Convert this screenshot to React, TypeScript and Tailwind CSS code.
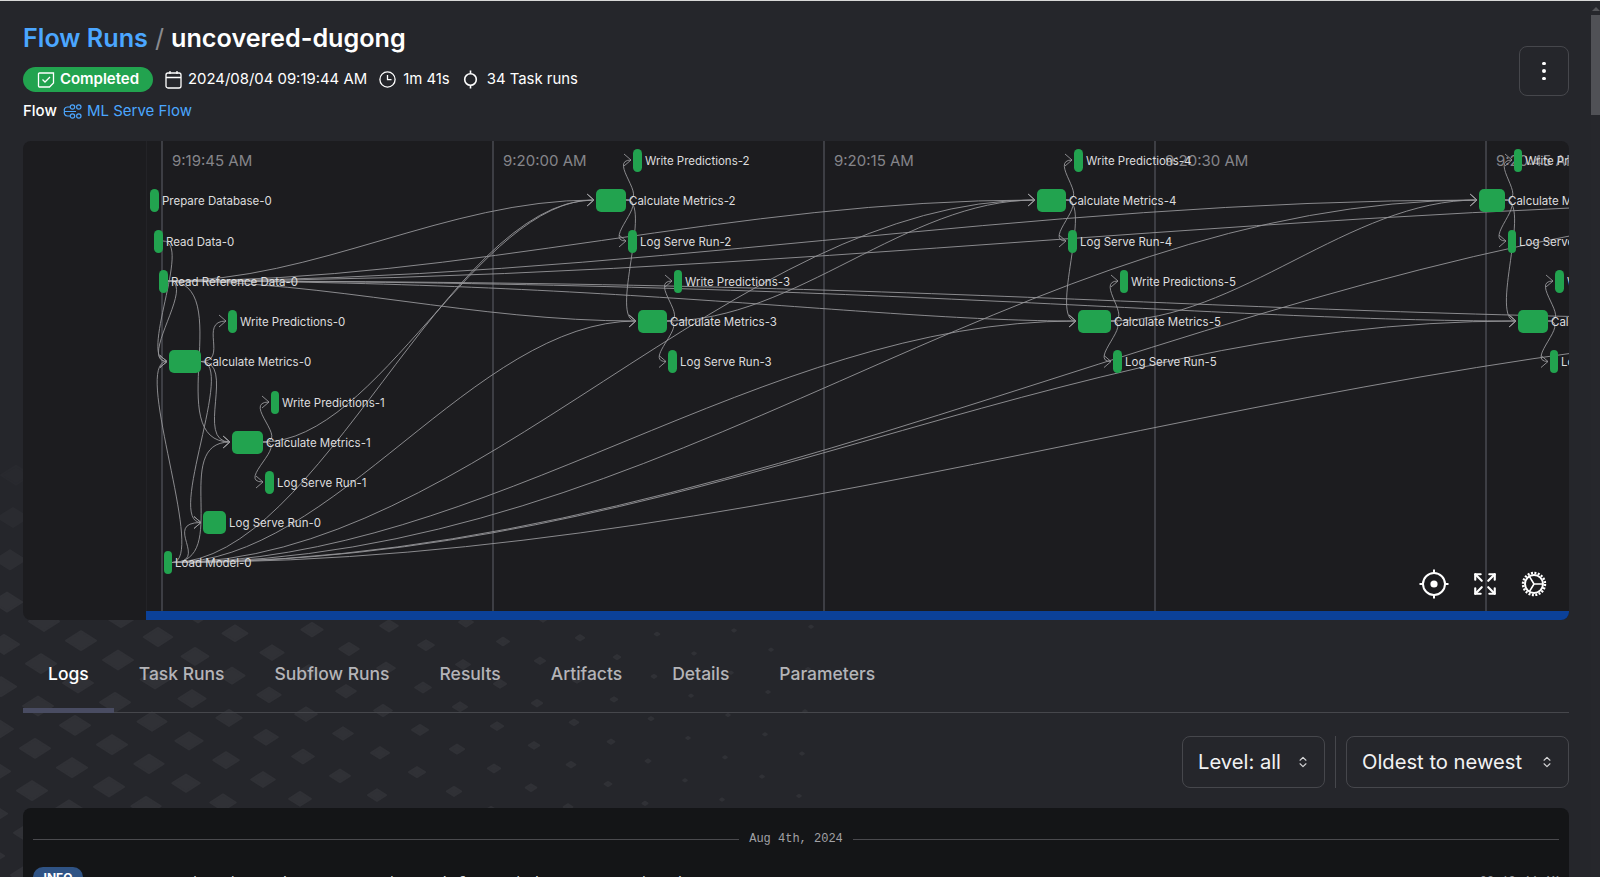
import { ChevronsUpDown, Expand } from 'lucide-react'

const rowY = [160, 200, 241, 281, 321, 361.5, 402, 442, 482, 522.5, 562.5]
const panelX = 23
const panelY = 141

type GraphNode = { id: string; label: string; x: number; w: number; row: number }

const nodes: GraphNode[] = [
  { id: 'prep', label: 'Prepare Database-0', x: 150, w: 9, row: 1 },
  { id: 'read', label: 'Read Data-0', x: 154, w: 9, row: 2 },
  { id: 'ref', label: 'Read Reference Data-0', x: 159, w: 9, row: 3 },
  { id: 'w0', label: 'Write Predictions-0', x: 228, w: 9, row: 4 },
  { id: 'c0', label: 'Calculate Metrics-0', x: 169, w: 32, row: 5 },
  { id: 'w1', label: 'Write Predictions-1', x: 271, w: 8, row: 6 },
  { id: 'c1', label: 'Calculate Metrics-1', x: 232, w: 31, row: 7 },
  { id: 'l1', label: 'Log Serve Run-1', x: 265, w: 9, row: 8 },
  { id: 'l0', label: 'Log Serve Run-0', x: 203, w: 23, row: 9 },
  { id: 'load', label: 'Load Model-0', x: 164, w: 8, row: 10 },
  { id: 'w2', label: 'Write Predictions-2', x: 633, w: 9, row: 0 },
  { id: 'c2', label: 'Calculate Metrics-2', x: 596, w: 30, row: 1 },
  { id: 'l2', label: 'Log Serve Run-2', x: 628, w: 9, row: 2 },
  { id: 'w3', label: 'Write Predictions-3', x: 674, w: 8, row: 3 },
  { id: 'c3', label: 'Calculate Metrics-3', x: 638, w: 29, row: 4 },
  { id: 'l3', label: 'Log Serve Run-3', x: 668, w: 9, row: 5 },
  { id: 'w4', label: 'Write Predictions-4', x: 1074, w: 9, row: 0 },
  { id: 'c4', label: 'Calculate Metrics-4', x: 1037, w: 29, row: 1 },
  { id: 'l4', label: 'Log Serve Run-4', x: 1068, w: 9, row: 2 },
  { id: 'w5', label: 'Write Predictions-5', x: 1120, w: 8, row: 3 },
  { id: 'c5', label: 'Calculate Metrics-5', x: 1078, w: 33, row: 4 },
  { id: 'l5', label: 'Log Serve Run-5', x: 1113, w: 9, row: 5 },
  { id: 'w6', label: 'Write Predictions-6', x: 1514, w: 8, row: 0 },
  { id: 'c6', label: 'Calculate Metrics-6', x: 1479, w: 26, row: 1 },
  { id: 'l6', label: 'Log Serve Run-6', x: 1508, w: 8, row: 2 },
  { id: 'w7', label: 'Write Predictions-7', x: 1555, w: 9, row: 3 },
  { id: 'c7', label: 'Calculate Metrics-7', x: 1518, w: 30, row: 4 },
  { id: 'l7', label: 'Log Serve Run-7', x: 1550, w: 8, row: 5 },
  // past the right edge of the panel, only their edges show
  { id: 'c8', label: '', x: 1920, w: 30, row: 1 },
  { id: 'c9', label: '', x: 2000, w: 30, row: 4 },
]

// from, to, control offset at the start, control offset at the end (default: 35% of the distance)
const edges: [string, string, number?, number?][] = [
  ['read', 'c0', 30],
  ['ref', 'c0', 30],
  ['load', 'c0', 36],
  ['ref', 'c1', 70],
  ['load', 'c1', 60],
  ['c0', 'c1', 36],
  ['c0', 'w0', 28],
  ['c0', 'l0', 36],
  ['load', 'l0', 40],
  ['c1', 'w1', 28],
  ['c1', 'l1', 28],
  ['c1', 'c2'],
  ['load', 'c2'],
  ['ref', 'c2'],
  ['c2', 'w2', 24],
  ['c2', 'l2', 24],
  ['c2', 'c3', 28],
  ['ref', 'c3'],
  ['load', 'c3'],
  ['c3', 'w3', 24],
  ['c3', 'l3', 24],
  ['c3', 'c4'],
  ['ref', 'c4'],
  ['load', 'c4'],
  ['c4', 'w4', 24],
  ['c4', 'l4', 24],
  ['c4', 'c5', 28],
  ['ref', 'c5', 450, 200],
  ['load', 'c5'],
  ['c5', 'w5', 24],
  ['c5', 'l5', 24],
  ['c5', 'c6'],
  ['ref', 'c6'],
  ['load', 'c6', 500, 460],
  ['c6', 'w6', 24],
  ['c6', 'l6', 24],
  ['c6', 'c7', 28],
  ['ref', 'c7', 700, 300],
  ['load', 'c7', 520, 470],
  ['c7', 'w7', 24],
  ['c7', 'l7', 24],
  ['ref', 'c8'],
  ['ref', 'c9', 900, 800],
  ['load', 'c8'],
  ['load', 'c9'],
]

const gridLines = [
  { x: 162, label: '9:19:45 AM' },
  { x: 493, label: '9:20:00 AM' },
  { x: 824, label: '9:20:15 AM' },
  { x: 1155, label: '9:20:30 AM' },
  { x: 1486, label: '9:20:45 AM' },
]

const tabs = ['Logs', 'Task Runs', 'Subflow Runs', 'Results', 'Artifacts', 'Details', 'Parameters']

function edgePath(fromId: string, toId: string, d1?: number, d2?: number) {
  const a = nodes.find((n) => n.id === fromId)!
  const b = nodes.find((n) => n.id === toId)!
  const x1 = a.x + a.w - panelX
  const y1 = rowY[a.row] - panelY
  const x2 = b.x - 2 - panelX
  const y2 = rowY[b.row] - panelY
  const start = d1 ?? Math.abs(x2 - x1) * 0.35
  const end = d2 ?? start
  return { d: `M${x1} ${y1} C${x1 + start} ${y1} ${x2 - end} ${y2} ${x2} ${y2}`, x2, y2 }
}

function PageBackdrop() {
  const shapes: { x: number; y: number; w: number; h: number; o: number }[] = []
  for (let i = -6; i < 16; i++) {
    for (let j = -12; j < 16; j++) {
      const x = 118 + i * 77 - j * 40
      const y = 659 - i * 3.7 + j * 23
      if (x < -20 || x > 830 || y < 430 || y > 890) continue
      const scale = Math.max(0.12, 1 - Math.max(0, x - 130) / 620)
      const o = Math.min(1, (y - 430) / 160)
      shapes.push({ x, y, w: 15 * scale, h: 9.5 * scale, o })
    }
  }
  return (
    <svg className="absolute left-0 top-0 h-[877px] w-[1591px]" viewBox="0 0 1591 877">
      {shapes.map((s) => (
        <polygon
          key={`${s.x}-${s.y}`}
          points={`${s.x - s.w},${s.y} ${s.x},${s.y - s.h} ${s.x + s.w},${s.y} ${s.x},${s.y + s.h}`}
          fill="#303136"
          stroke="#303136"
          strokeLinejoin="round"
          strokeWidth="2"
          opacity={s.o}
        />
      ))}
    </svg>
  )
}

function CheckBadgeIcon() {
  return (
    <svg width="18" height="16" viewBox="0 0 18 16" fill="none" stroke="currentColor" strokeWidth="1.3">
      <path d="M2.5 1h14v10l-4 4h-10a1 1 0 0 1-1-1V2a1 1 0 0 1 1-1z" />
      <path d="m5.5 7.5 2.5 2.5 5-5" />
    </svg>
  )
}

function CalendarIcon() {
  return (
    <svg width="17" height="19" viewBox="0 0 17 19" fill="none" stroke="currentColor" strokeWidth="1.3">
      <rect x="1" y="3" width="15" height="15" rx="2" />
      <path d="M1 7.5h15M5 1v3M12 1v3" />
    </svg>
  )
}

function ClockIcon() {
  return (
    <svg width="17" height="17" viewBox="0 0 17 17" fill="none" stroke="currentColor" strokeWidth="1.3">
      <circle cx="8.5" cy="8.5" r="7.6" />
      <path d="M8.5 4v4.7h4" />
    </svg>
  )
}

function TaskRunIcon() {
  return (
    <svg width="15" height="19" viewBox="0 0 15 19" fill="none" stroke="currentColor" strokeWidth="1.6">
      <circle cx="7.5" cy="9.5" r="5.8" />
      <path d="M7.5 0.5v3M7.5 15.5v3" />
    </svg>
  )
}

function FlowIcon() {
  return (
    <svg width="19" height="15" viewBox="0 0 19 15" fill="none" stroke="currentColor" strokeWidth="1.2">
      <circle cx="9.5" cy="3" r="2.2" />
      <circle cx="15.8" cy="3" r="2.2" />
      <circle cx="9.5" cy="12" r="2.2" />
      <circle cx="15.8" cy="12" r="2.2" />
      <path d="M7.3 3H4.5a3.2 3.2 0 0 0-3 4.5 3.2 3.2 0 0 0 3 4.5h2.8M2 7.5h11" />
    </svg>
  )
}

function TargetIcon() {
  return (
    <svg width="30" height="30" viewBox="0 0 30 30" fill="none" stroke="white" strokeWidth="2">
      <circle cx="15" cy="15" r="11" />
      <circle cx="15" cy="15" r="3.6" fill="white" stroke="none" />
      <path d="M15 0.5v4M15 25.5v4M0.5 15h4M25.5 15h4" />
    </svg>
  )
}

function GearIcon() {
  return (
    <svg width="26" height="26" viewBox="0 0 26 26" fill="none" stroke="white">
      <circle cx="13" cy="13" r="9" strokeWidth="2" />
      <circle cx="13" cy="13" r="11" strokeWidth="2.4" strokeDasharray="2 1.46" />
      <path d="M13 13h8.5M13 13 8.5 5.6M13 13 8.5 20.4" strokeWidth="1.6" />
    </svg>
  )
}

function FlowGraph() {
  return (
    <div className="relative mt-[20px] h-[479px] overflow-hidden rounded-lg bg-[#1c1c1f]">
      <div className="absolute bottom-0 left-[123px] top-0 w-px bg-[#232327]" />
      {gridLines.map((g) => (
        <div key={g.label}>
          <div className="absolute bottom-0 top-0 w-[2px] bg-[#3d3e44]" style={{ left: g.x - panelX - 1 }} />
          <span
            className="absolute top-[10px] whitespace-nowrap text-[15px] leading-5 text-[#85858a]"
            style={{ left: g.x - panelX + 10 }}
          >
            {g.label}
          </span>
        </div>
      ))}
      <svg className="absolute left-0 top-0 h-[479px] w-[1546px]" viewBox="0 0 1546 479" fill="none">
        {edges.map(([from, to, d1, d2]) => {
          const e = edgePath(from, to, d1, d2)
          return (
            <g key={`${from}-${to}`} stroke="#96969a" strokeWidth="0.9">
              <path d={e.d} />
              <path d={`M${e.x2 - 7} ${e.y2 - 6} L${e.x2} ${e.y2} L${e.x2 - 7} ${e.y2 + 6}`} />
            </g>
          )
        })}
      </svg>
      {nodes.map((n) => (
        <div key={n.id}>
          <div
            className="absolute h-[23px] rounded-[5px] bg-[#22a34f]"
            style={{ left: n.x - panelX, width: n.w, top: rowY[n.row] - panelY - 11.5 }}
          />
          <span
            className="absolute whitespace-nowrap text-[11.5px] leading-4 text-[#dcdcde]"
            style={{ left: n.x + n.w + 3 - panelX, top: rowY[n.row] - panelY - 7.5 }}
          >
            {n.label}
          </span>
        </div>
      ))}
      <div className="absolute bottom-[21px] right-[22px] flex items-center gap-[23px] text-white">
        <TargetIcon />
        <Expand size={26} strokeWidth={2} />
        <GearIcon />
      </div>
      <div className="absolute bottom-0 left-[123px] right-0 h-[9px] bg-[#0b4199]" />
    </div>
  )
}

function SelectBox({ label, width }: { label: string; width: string }) {
  return (
    <div className={`flex h-[52px] items-center justify-between rounded-lg border border-[#46474c] pl-[15px] pr-[14px] text-[20.2px] text-[#f2f2f3] ${width}`}>
      <span>{label}</span>
      <ChevronsUpDown size={14} className="text-[#d4d4d6]" />
    </div>
  )
}

export default function App() {
  return (
    <div className="relative flex h-[877px] overflow-hidden border-t border-[#d8d8d8] bg-[#25262b] font-['Inter',sans-serif] text-white">
      <PageBackdrop />
      <main className="relative min-w-0 flex-1 pl-[23px] pr-[22px] pt-[21px]">
        <div className="flex items-start justify-between">
          <div>
            <h1 className="flex items-center text-[25.2px] font-semibold leading-8">
              <span className="text-[#4ba6ff]">Flow Runs</span>
              <span className="mx-[7px] font-normal text-[#8a8b90]">/</span>
              <span>uncovered-dugong</span>
            </h1>
            <div className="mt-[13px] flex items-center text-[14.9px]">
              <span className="flex h-[25px] w-[130px] items-center justify-center gap-[5px] rounded-full bg-[#22a34f] text-[15px] font-semibold">
                <CheckBadgeIcon />
                Completed
              </span>
              <span className="ml-[12px] flex items-center gap-[6px]">
                <CalendarIcon />
                2024/08/04 09:19:44 AM
              </span>
              <span className="ml-[12px] flex items-center gap-[7px]">
                <ClockIcon />
                1m 41s
              </span>
              <span className="ml-[13px] flex items-center gap-[9px]">
                <TaskRunIcon />
                34 Task runs
              </span>
            </div>
            <div className="mt-[9px] flex items-center text-[15px] leading-5">
              <span className="font-medium">Flow</span>
              <span className="ml-[6px] flex items-center gap-[5px] text-[#4ba6ff]">
                <FlowIcon />
                ML Serve Flow
              </span>
            </div>
          </div>
          <button className="mt-[24px] flex h-[50px] w-[50px] flex-col items-center justify-center gap-[4px] rounded-lg border border-[#46474c]">
            <span className="h-[3.5px] w-[3.5px] rounded-full bg-white" />
            <span className="h-[3.5px] w-[3.5px] rounded-full bg-white" />
            <span className="h-[3.5px] w-[3.5px] rounded-full bg-white" />
          </button>
        </div>

        <FlowGraph />

        <div className="mt-[25px] flex h-[68px] border-b border-[#46474c]">
          {tabs.map((t, i) => (
            <div
              key={t}
              className={`flex h-[68px] items-start border-b-[5px] px-[25px] pt-[17px] text-[17.5px] font-medium leading-6 ${
                i === 0 ? 'border-[#494c62] text-white' : 'border-transparent text-[#b4b4b8]'
              }`}
            >
              {t}
            </div>
          ))}
        </div>

        <div className="mt-[23px] flex justify-end gap-[10px]">
          <SelectBox label="Level: all" width="w-[143px]" />
          <div className="w-px bg-[#46474c]" />
          <SelectBox label="Oldest to newest" width="w-[223px]" />
        </div>

        <div className="mt-[20px] h-[100px] rounded-lg bg-[#141517] px-[10px] pt-[21px]">
          <div className="flex items-center gap-[10px]">
            <div className="h-px flex-1 bg-[#4a4a4e]" />
            <span className="font-['Liberation_Mono',monospace] text-[12px] leading-5 text-[#a2a2a6]">Aug 4th, 2024</span>
            <div className="h-px flex-1 bg-[#4a4a4e]" />
          </div>
          <div className="mt-[18px] flex items-start">
            <span className="flex h-[20px] w-[50px] justify-center rounded-full bg-[#2f5385] pt-[1px] text-[12px] font-bold leading-5">INFO</span>
            <span className="ml-[55px] flex-1 pt-[6px] font-['Liberation_Mono',monospace] text-[14px] leading-5 text-[#d8d8da]">
              Created task run 'Prepare Database-0' for task 'Prepare Database'
            </span>
            <span className="pt-[5px] font-['Liberation_Mono',monospace] text-[12px] leading-5 text-[#8f8f94]">09:19:44 AM</span>
          </div>
        </div>
      </main>
      <aside className="relative w-[9px] shrink-0 bg-[#26272c]">
        <div className="mx-auto mt-[6px] h-0 w-0 border-x-[4px] border-b-[4px] border-x-transparent border-b-[#55565a]" />
        <div className="mt-[4px] h-[100px] bg-[#505156]" />
      </aside>
    </div>
  )
}
